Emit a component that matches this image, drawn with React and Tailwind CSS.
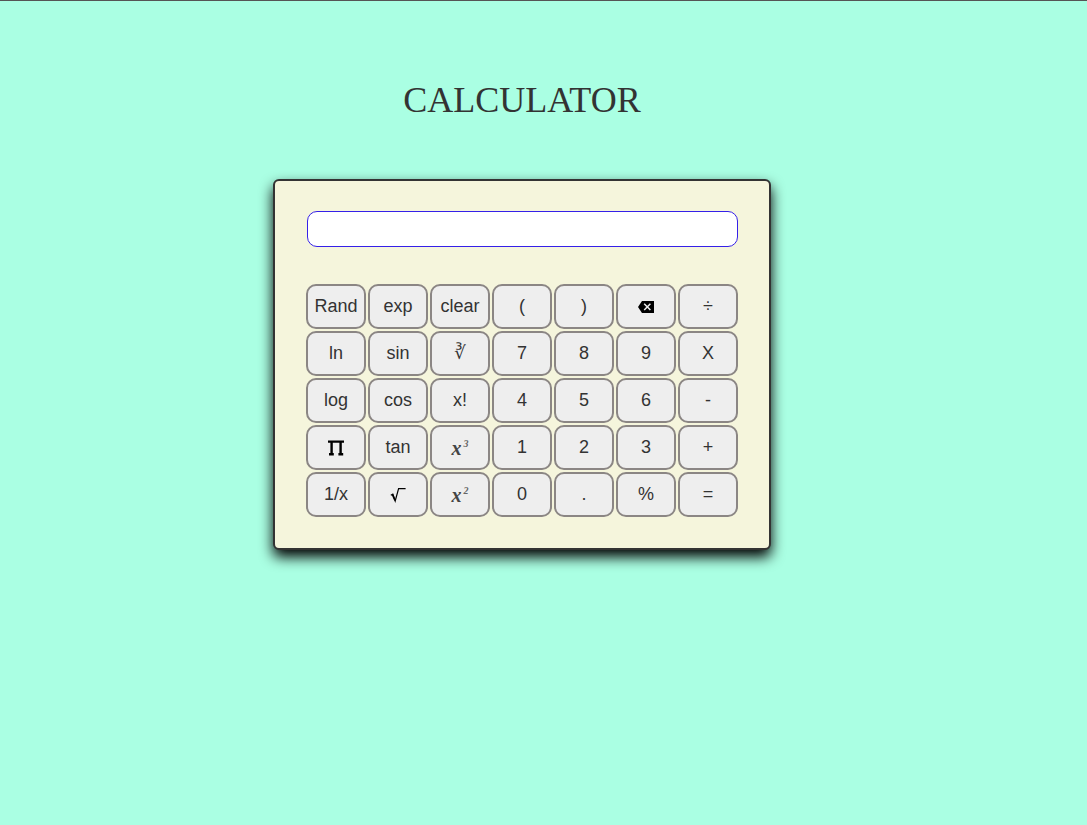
import React, { useState } from "react";

const PiIcon = () => (
  <svg width="16" height="16" viewBox="0 0 16 16" aria-hidden="true" className="mt-0.5">
    <path d="M0 0.4h16v2.4H13.8v10.2h1.4v2.4H10.4v-2.4h1V2.8H4.8v10.2h1v2.4H1v-2.4h1.4V2.8H0z" fill="#000" />
  </svg>
);

const RootIcon = () => (
  <svg width="16" height="16" viewBox="0 0 16 16" aria-hidden="true" className="mt-0.5">
    <path d="M0.8 8.2L2.8 7.2L5.2 14L8.6 1.7H15.6" fill="none" stroke="#000" strokeWidth="1.2" />
    <path d="M2.4 7.4L5 13.4" stroke="#000" strokeWidth="1.6" />
  </svg>
);

const BackspaceIcon = () => (
  <svg width="16" height="12" viewBox="0 0 16 12" aria-hidden="true" className="mt-0.5">
    <path d="M4 0H16V12H4L0 6Z" fill="#000" />
    <path d="M6.2 2.8L12.4 9M12.4 2.8L6.2 9" stroke="#eee" strokeWidth="1.5" />
  </svg>
);

const Power = ({ n }) => (
  <span className="mt-0.5 flex items-start font-['Liberation_Serif',serif] italic leading-4 text-[#444]">
    <span className="text-[20px] font-bold leading-4">x</span>
    <span className="ml-0.5 text-[10px] font-bold leading-2 text-[#666]">{n}</span>
  </span>
);

const CubeRoot = () => <span className="font-['DejaVu_Sans',sans-serif]">∛</span>;

const keys = [
  { id: "Rand" }, { id: "exp" }, { id: "clear" }, { id: "(" }, { id: ")" },
  { id: "backspace", face: <BackspaceIcon /> }, { id: "÷" },
  { id: "ln" }, { id: "sin" }, { id: "cube root", face: <CubeRoot /> }, { id: "7" }, { id: "8" }, { id: "9" }, { id: "X" },
  { id: "log" }, { id: "cos" }, { id: "x!" }, { id: "4" }, { id: "5" }, { id: "6" }, { id: "-" },
  { id: "pi", face: <PiIcon /> }, { id: "tan" }, { id: "cube", face: <Power n="3" /> },
  { id: "1" }, { id: "2" }, { id: "3" }, { id: "+" },
  { id: "1/x" }, { id: "square root", face: <RootIcon /> }, { id: "square", face: <Power n="2" /> },
  { id: "0" }, { id: "." }, { id: "%" }, { id: "=" },
];

export default function App() {
  const [value, setValue] = useState("");

  const press = (id) => {
    if (id === "clear") setValue("");
    else if (id === "backspace") setValue((v) => v.slice(0, -1));
    else if (/^[0-9.()%+\-÷X]$/.test(id)) setValue((v) => v + id);
  };

  return (
    <main className="flex min-h-screen flex-col items-center border-t border-[#555] bg-[#aaffe3] pr-[43px] text-[#333]">
      <h1 className="mt-[79px] font-['Liberation_Serif',serif] text-[36px] leading-10">CALCULATOR</h1>
      <section className="mt-[59px] rounded-md border-2 border-[#333] bg-[#f5f5dc] px-[31px] pt-[30px] pb-[31px] font-['Liberation_Sans',sans-serif] text-[18px] shadow-[0_7px_14px_#000]">
        <div className="pl-px">
          <input
            type="text"
            aria-label="Display"
            value={value}
            onChange={(e) => setValue(e.target.value)}
            className="block h-9 w-full rounded-[10px] border border-[#3520e8] bg-white px-2 text-right outline-none"
          />
        </div>
        <div className="mt-[37px] grid grid-cols-[repeat(7,60px)] gap-0.5">
          {keys.map(({ id, face }) => (
            <button
              key={id}
              type="button"
              aria-label={face ? id : undefined}
              onClick={() => press(id)}
              className="flex h-[45px] items-center justify-center rounded-[10px] border-2 border-[#8b8684] bg-[#eee] pb-0.5 leading-5"
            >
              {face || id}
            </button>
          ))}
        </div>
      </section>
    </main>
  );
}
